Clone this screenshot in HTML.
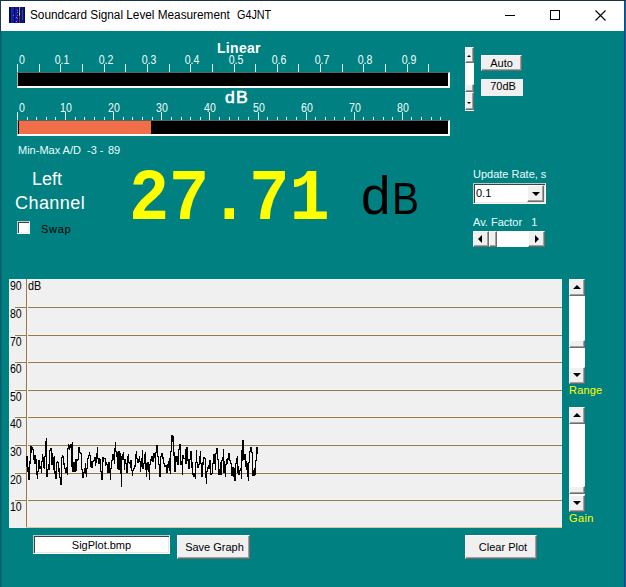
<!DOCTYPE html>
<html><head><meta charset="utf-8"><style>
*{margin:0;padding:0;box-sizing:border-box}
html,body{width:626px;height:587px;overflow:hidden;background:#008080}
body{position:relative;font-family:"Liberation Sans",sans-serif}
.a{position:absolute}
.lbl{position:absolute;color:#e8ffff;font-size:11px;line-height:11px;white-space:nowrap}
.rl{position:absolute;color:#f0ffff;font-size:12px;line-height:12px;white-space:nowrap;transform:scaleX(0.88);transform-origin:50% 0;width:30px;text-align:center}
.tk{position:absolute;width:1px;background:#e8ffff}
.btn{position:absolute;background:#f0f0f0;border-top:1px solid #fff;border-left:1px solid #fff;border-right:1px solid #6d6d6d;border-bottom:1px solid #6d6d6d;box-shadow:inset -1px -1px 0 #a0a0a0;color:#000;font-size:12px;text-align:center}
.sb{position:absolute;background:#f0f0f0;border-top:1px solid #fff;border-left:1px solid #fff;border-right:1px solid #6d6d6d;border-bottom:1px solid #6d6d6d;box-shadow:inset -1px -1px 0 #a0a0a0}
</style></head><body>

<div class="a" style="left:0;top:0;width:1px;height:587px;background:#045e6e"></div>
<div class="a" style="left:1px;top:0;width:1px;height:587px;background:#0e6e78"></div>
<div class="a" style="left:624px;top:0;width:1px;height:587px;background:#0a4e84"></div>
<div class="a" style="left:625px;top:0;width:1px;height:587px;background:#1c5f9c"></div>
<div class="a" style="left:0;top:0;width:626px;height:1px;background:#183448"></div>
<div class="a" style="left:1px;top:1px;width:623px;height:30px;background:#fff"></div>
<div class="a" style="left:0;top:0;width:1px;height:31px;background:#1c3a52"></div>
<svg class="a" style="left:9px;top:7px" width="16" height="16" viewBox="0 0 16 16" shape-rendering="crispEdges">
<rect width="16" height="16" fill="#00084a"/>
<rect x="2" y="0" width="1" height="16" fill="#0c3a8a"/>
<rect x="3" y="0" width="2" height="16" fill="#1020b0"/>
<rect x="6" y="0" width="3" height="16" fill="#1418a8"/>
<rect x="4" y="8" width="1" height="1" fill="#5070f0"/>
<rect x="7" y="10" width="1" height="1" fill="#8090ff"/>
<rect x="7" y="14" width="1" height="1" fill="#7080ff"/>
<rect x="8" y="3" width="1" height="1" fill="#5080e0"/>
<rect x="8" y="5" width="1" height="1" fill="#5080e0"/>
<rect x="8" y="8" width="1" height="1" fill="#5080e0"/>
<rect x="8" y="11" width="1" height="1" fill="#5080e0"/>
<rect x="10" y="0" width="1" height="16" fill="#a09890"/>
<rect x="10" y="6" width="1" height="2" fill="#e0d080"/>
<rect x="10" y="9" width="1" height="7" fill="#803060"/>
<rect x="11" y="0" width="1" height="16" fill="#201040"/>
<rect x="12" y="0" width="3" height="16" fill="#0c1878"/>
<rect x="13" y="3" width="1" height="10" fill="#2a4aa0"/>
</svg>
<div class="a" style="left:30px;top:8px;font-size:12px;line-height:14px;color:#000;white-space:pre;transform:scaleX(0.982);transform-origin:0 0">Soundcard Signal Level Measurement</div>
<div class="a" style="left:237px;top:8px;font-size:12px;line-height:14px;color:#000;white-space:pre;transform:scaleX(0.9);transform-origin:0 0">G4JNT</div>
<div class="a" style="left:505px;top:15px;width:10px;height:1px;background:#000"></div>
<div class="a" style="left:550px;top:10px;width:10px;height:10px;border:1px solid #000"></div>
<svg class="a" style="left:595px;top:10px" width="11" height="11" viewBox="0 0 11 11"><path d="M0.5 0.5L10.5 10.5M10.5 0.5L0.5 10.5" stroke="#000" stroke-width="1.1"/></svg>
<div class="a" style="left:217px;top:41px;font-size:14px;line-height:14px;font-weight:bold;letter-spacing:0.3px;color:#fff">Linear</div>
<div class="tk" style="left:17px;top:64px;height:8px"></div>
<div class="rl" style="left:7px;top:54px">0</div>
<div class="tk" style="left:39px;top:64px;height:8px"></div>
<div class="tk" style="left:60px;top:64px;height:8px"></div>
<div class="rl" style="left:47px;top:54px">0.1</div>
<div class="tk" style="left:82px;top:64px;height:8px"></div>
<div class="tk" style="left:104px;top:64px;height:8px"></div>
<div class="rl" style="left:91px;top:54px">0.2</div>
<div class="tk" style="left:125px;top:64px;height:8px"></div>
<div class="tk" style="left:147px;top:64px;height:8px"></div>
<div class="rl" style="left:134px;top:54px">0.3</div>
<div class="tk" style="left:169px;top:64px;height:8px"></div>
<div class="tk" style="left:190px;top:64px;height:8px"></div>
<div class="rl" style="left:177px;top:54px">0.4</div>
<div class="tk" style="left:212px;top:64px;height:8px"></div>
<div class="tk" style="left:234px;top:64px;height:8px"></div>
<div class="rl" style="left:221px;top:54px">0.5</div>
<div class="tk" style="left:255px;top:64px;height:8px"></div>
<div class="tk" style="left:277px;top:64px;height:8px"></div>
<div class="rl" style="left:264px;top:54px">0.6</div>
<div class="tk" style="left:298px;top:64px;height:8px"></div>
<div class="tk" style="left:320px;top:64px;height:8px"></div>
<div class="rl" style="left:307px;top:54px">0.7</div>
<div class="tk" style="left:342px;top:64px;height:8px"></div>
<div class="tk" style="left:363px;top:64px;height:8px"></div>
<div class="rl" style="left:350px;top:54px">0.8</div>
<div class="tk" style="left:385px;top:64px;height:8px"></div>
<div class="tk" style="left:407px;top:64px;height:8px"></div>
<div class="rl" style="left:394px;top:54px">0.9</div>
<div class="tk" style="left:428px;top:64px;height:8px"></div>
<div class="a" style="left:17px;top:72px;width:433px;height:16px;background:#000;border-top:1px solid #606060;border-left:1px solid #a8b8b8;border-right:2px solid #fff;border-bottom:2px solid #fff"></div>
<div class="a" style="left:225px;top:90px;font-size:16px;line-height:16px;letter-spacing:1px;color:#fff;-webkit-text-stroke:0.5px #fff;transform:scaleX(1.1);transform-origin:0 0">dB</div>
<div class="tk" style="left:17px;top:112px;height:8px"></div>
<div class="rl" style="left:7px;top:102px">0</div>
<div class="tk" style="left:27px;top:117px;height:3px"></div>
<div class="tk" style="left:36px;top:117px;height:3px"></div>
<div class="tk" style="left:46px;top:117px;height:3px"></div>
<div class="tk" style="left:55px;top:117px;height:3px"></div>
<div class="tk" style="left:65px;top:112px;height:8px"></div>
<div class="rl" style="left:51px;top:102px">10</div>
<div class="tk" style="left:75px;top:117px;height:3px"></div>
<div class="tk" style="left:84px;top:117px;height:3px"></div>
<div class="tk" style="left:94px;top:117px;height:3px"></div>
<div class="tk" style="left:104px;top:117px;height:3px"></div>
<div class="tk" style="left:113px;top:112px;height:8px"></div>
<div class="rl" style="left:99px;top:102px">20</div>
<div class="tk" style="left:123px;top:117px;height:3px"></div>
<div class="tk" style="left:132px;top:117px;height:3px"></div>
<div class="tk" style="left:142px;top:117px;height:3px"></div>
<div class="tk" style="left:152px;top:117px;height:3px"></div>
<div class="tk" style="left:161px;top:112px;height:8px"></div>
<div class="rl" style="left:147px;top:102px">30</div>
<div class="tk" style="left:171px;top:117px;height:3px"></div>
<div class="tk" style="left:181px;top:117px;height:3px"></div>
<div class="tk" style="left:190px;top:117px;height:3px"></div>
<div class="tk" style="left:200px;top:117px;height:3px"></div>
<div class="tk" style="left:209px;top:112px;height:8px"></div>
<div class="rl" style="left:195px;top:102px">40</div>
<div class="tk" style="left:219px;top:117px;height:3px"></div>
<div class="tk" style="left:229px;top:117px;height:3px"></div>
<div class="tk" style="left:238px;top:117px;height:3px"></div>
<div class="tk" style="left:248px;top:117px;height:3px"></div>
<div class="tk" style="left:258px;top:112px;height:8px"></div>
<div class="rl" style="left:244px;top:102px">50</div>
<div class="tk" style="left:267px;top:117px;height:3px"></div>
<div class="tk" style="left:277px;top:117px;height:3px"></div>
<div class="tk" style="left:286px;top:117px;height:3px"></div>
<div class="tk" style="left:296px;top:117px;height:3px"></div>
<div class="tk" style="left:306px;top:112px;height:8px"></div>
<div class="rl" style="left:292px;top:102px">60</div>
<div class="tk" style="left:315px;top:117px;height:3px"></div>
<div class="tk" style="left:325px;top:117px;height:3px"></div>
<div class="tk" style="left:334px;top:117px;height:3px"></div>
<div class="tk" style="left:344px;top:117px;height:3px"></div>
<div class="tk" style="left:354px;top:112px;height:8px"></div>
<div class="rl" style="left:340px;top:102px">70</div>
<div class="tk" style="left:363px;top:117px;height:3px"></div>
<div class="tk" style="left:373px;top:117px;height:3px"></div>
<div class="tk" style="left:383px;top:117px;height:3px"></div>
<div class="tk" style="left:392px;top:117px;height:3px"></div>
<div class="tk" style="left:402px;top:112px;height:8px"></div>
<div class="rl" style="left:388px;top:102px">80</div>
<div class="tk" style="left:411px;top:117px;height:3px"></div>
<div class="tk" style="left:421px;top:117px;height:3px"></div>
<div class="tk" style="left:431px;top:117px;height:3px"></div>
<div class="tk" style="left:440px;top:117px;height:3px"></div>
<div class="a" style="left:17px;top:120px;width:433px;height:16px;background:#000;border-top:1px solid #606060;border-left:1px solid #a8b8b8;border-right:2px solid #fff;border-bottom:2px solid #fff"></div>
<div class="a" style="left:19px;top:121px;width:132px;height:13px;background:#f06f48"></div>
<div class="a" style="left:465px;top:47px;width:9px;height:64px;background:#fff"></div>
<div class="sb" style="left:465px;top:47px;width:9px;height:16px"></div>
<div class="sb" style="left:465px;top:84px;width:9px;height:8px"></div>
<div class="sb" style="left:465px;top:92px;width:9px;height:18px"></div>
<div class="a" style="left:467px;top:55px;width:0;height:0;border-left:2px solid transparent;border-right:2px solid transparent;border-bottom:2px solid #000"></div>
<div class="a" style="left:467px;top:102px;width:0;height:0;border-left:2px solid transparent;border-right:2px solid transparent;border-top:2px solid #000"></div>
<div class="btn" style="left:481px;top:55px;width:41px;height:16px;line-height:14px;font-size:11px">Auto</div>
<div class="a" style="left:481px;top:79px;width:42px;height:17px;background:#f0f0f0;color:#000;font-size:11px;line-height:14px;text-align:center;padding-left:2px">70dB</div>
<div class="lbl" style="left:18px;top:145px;font-size:11px;color:#e8ffff;white-space:pre">Min-Max A/D</div>
<div class="lbl" style="left:87px;top:145px;font-size:11px;color:#e8ffff;white-space:pre">-3 -</div>
<div class="lbl" style="left:108px;top:145px;font-size:11px;color:#e8ffff;white-space:pre">89</div>
<div class="a" style="left:32px;top:169px;font-size:18px;line-height:20px;color:#fff">Left</div>
<div class="a" style="left:15px;top:193px;font-size:18px;line-height:20px;letter-spacing:0.45px;color:#fff">Channel</div>
<div class="a" style="left:17px;top:221px;width:13px;height:13px;background:#fff;border-top:1px solid #b8d0d0;border-left:1px solid #b8d0d0;border-right:1px solid #fff;border-bottom:1px solid #fff;box-shadow:inset 1px 1px 0 #404040, inset -1px -1px 0 #f0f0f0"></div>
<div class="a" style="left:41px;top:223px;font-size:11px;line-height:12px;letter-spacing:0.7px;color:#000">Swap</div>
<div class="a" style="left:129px;top:164px;font-family:'Liberation Mono',monospace;font-weight:bold;font-size:72px;line-height:72px;color:#ffff00;white-space:pre;transform:scaleX(0.928);transform-origin:0 0">27.71</div>
<div class="a" style="left:361px;top:169px;font-size:53px;line-height:53px;color:#000">d</div>
<div class="a" style="left:392px;top:176px;font-size:45px;line-height:45px;color:#000;transform:scaleX(0.9);transform-origin:0 0">B</div>
<div class="lbl" style="left:473px;top:168px;font-size:11px;line-height:12px;color:#e8ffff">Update Rate, s</div>
<div class="a" style="left:473px;top:183px;width:73px;height:21px;background:#fff;border-top:1px solid #b0d0d0;border-left:1px solid #b0d0d0;border-right:1px solid #fff;border-bottom:1px solid #fff;box-shadow:inset 1px 1px 0 #404040, inset -1px -1px 0 #e8e8e8"></div>
<div class="a" style="left:476px;top:187px;font-size:11px;line-height:12px;color:#000">0.1</div>
<div class="sb" style="left:527px;top:185px;width:17px;height:17px"></div>
<div class="a" style="left:532px;top:192px;width:0;height:0;border-left:4px solid transparent;border-right:4px solid transparent;border-top:4px solid #000"></div>
<div class="lbl" style="left:473px;top:216px;font-size:11px;line-height:12px;color:#e8ffff;white-space:pre">Av. Factor   1</div>
<div class="a" style="left:473px;top:231px;width:72px;height:16px;background:#fff"></div>
<div class="sb" style="left:473px;top:231px;width:16px;height:16px"></div>
<div class="sb" style="left:489px;top:231px;width:8px;height:16px"></div>
<div class="sb" style="left:528px;top:231px;width:17px;height:16px"></div>
<div class="a" style="left:478px;top:235px;width:0;height:0;border-top:4px solid transparent;border-bottom:4px solid transparent;border-right:4px solid #000"></div>
<div class="a" style="left:535px;top:235px;width:0;height:0;border-top:4px solid transparent;border-bottom:4px solid transparent;border-left:4px solid #000"></div>
<div class="a" style="left:9px;top:279px;width:553px;height:249px;background:#f0f0f0;border-top:1px solid #e8ffff;border-left:1px solid #e8ffff"></div>
<svg class="a" style="left:0;top:0" width="626" height="587">
<line x1="15" y1="499.5" x2="562" y2="499.5" stroke="#fdf5e2" stroke-width="1"/>
<line x1="15" y1="500.5" x2="562" y2="500.5" stroke="#8c7a58" stroke-width="1"/>
<line x1="15" y1="472.5" x2="562" y2="472.5" stroke="#fdf5e2" stroke-width="1"/>
<line x1="15" y1="473.5" x2="562" y2="473.5" stroke="#8c7a58" stroke-width="1"/>
<line x1="15" y1="444.5" x2="562" y2="444.5" stroke="#fdf5e2" stroke-width="1"/>
<line x1="15" y1="445.5" x2="562" y2="445.5" stroke="#8c7a58" stroke-width="1"/>
<line x1="15" y1="416.5" x2="562" y2="416.5" stroke="#fdf5e2" stroke-width="1"/>
<line x1="15" y1="417.5" x2="562" y2="417.5" stroke="#8c7a58" stroke-width="1"/>
<line x1="15" y1="389.5" x2="562" y2="389.5" stroke="#fdf5e2" stroke-width="1"/>
<line x1="15" y1="390.5" x2="562" y2="390.5" stroke="#8c7a58" stroke-width="1"/>
<line x1="15" y1="361.5" x2="562" y2="361.5" stroke="#fdf5e2" stroke-width="1"/>
<line x1="15" y1="362.5" x2="562" y2="362.5" stroke="#8c7a58" stroke-width="1"/>
<line x1="15" y1="334.5" x2="562" y2="334.5" stroke="#fdf5e2" stroke-width="1"/>
<line x1="15" y1="335.5" x2="562" y2="335.5" stroke="#8c7a58" stroke-width="1"/>
<line x1="15" y1="306.5" x2="562" y2="306.5" stroke="#fdf5e2" stroke-width="1"/>
<line x1="15" y1="307.5" x2="562" y2="307.5" stroke="#8c7a58" stroke-width="1"/>
<line x1="27.5" y1="279" x2="27.5" y2="528" stroke="#fbf3e0" stroke-width="1"/>
<line x1="26.5" y1="279" x2="26.5" y2="528" stroke="#8c7a58" stroke-width="1"/>
<line x1="26" y1="527.5" x2="562" y2="527.5" stroke="#d8c8a8" stroke-width="1"/>
<path d="M26 456h1v11h-1zM27 456h1v16h-1zM28 467h1v13h-1zM29 461h1v19h-1zM30 446h1v18h-1zM31 446h1v7h-1zM32 447h1v3h-1zM33 449h1v11h-1zM34 455h1v9h-1zM35 455h1v9h-1zM36 459h1v16h-1zM37 471h1v8h-1zM38 460h1v12h-1zM39 460h1v9h-1zM40 466h1v3h-1zM41 461h1v12h-1zM42 454h1v8h-1zM43 457h1v11h-1zM44 456h1v13h-1zM45 441h1v16h-1zM46 438h1v39h-1zM47 469h1v8h-1zM48 464h1v6h-1zM49 450h1v20h-1zM50 448h1v3h-1zM51 448h1v17h-1zM52 453h1v12h-1zM53 457h1v13h-1zM54 456h1v18h-1zM55 471h1v8h-1zM56 462h1v17h-1zM57 461h1v2h-1zM58 462h1v10h-1zM59 468h1v10h-1zM60 477h1v8h-1zM61 457h1v28h-1zM62 455h1v3h-1zM63 456h1v9h-1zM64 463h1v6h-1zM65 468h1v5h-1zM66 467h1v6h-1zM67 448h1v27h-1zM68 444h1v5h-1zM69 445h1v5h-1zM70 444h1v4h-1zM71 444h1v23h-1zM72 442h1v30h-1zM73 462h1v10h-1zM74 462h1v10h-1zM75 459h1v13h-1zM76 459h1v12h-1zM77 459h1v2h-1zM78 447h1v13h-1zM79 447h1v6h-1zM80 452h1v2h-1zM81 453h1v17h-1zM82 469h1v9h-1zM83 472h1v6h-1zM84 468h1v5h-1zM85 463h1v11h-1zM86 468h1v9h-1zM87 458h1v11h-1zM88 455h1v4h-1zM89 452h1v4h-1zM90 455h1v12h-1zM91 461h1v7h-1zM92 461h1v7h-1zM93 460h1v2h-1zM94 457h1v4h-1zM95 457h1v9h-1zM96 453h1v10h-1zM97 447h1v12h-1zM98 458h1v6h-1zM99 458h1v6h-1zM100 459h1v13h-1zM101 471h1v9h-1zM102 457h1v23h-1zM103 457h1v5h-1zM104 458h1v1h-1zM105 458h1v8h-1zM106 462h1v3h-1zM107 464h1v9h-1zM108 462h1v11h-1zM109 462h1v11h-1zM110 468h1v12h-1zM111 460h1v9h-1zM112 454h1v7h-1zM113 454h1v6h-1zM114 448h1v16h-1zM115 442h1v10h-1zM116 451h1v6h-1zM117 452h1v17h-1zM118 451h1v19h-1zM119 451h1v19h-1zM120 453h1v21h-1zM121 456h1v31h-1zM122 454h1v6h-1zM123 452h1v8h-1zM124 459h1v11h-1zM125 459h1v5h-1zM126 463h1v10h-1zM127 456h1v17h-1zM128 454h1v9h-1zM129 462h1v2h-1zM130 460h1v8h-1zM131 460h1v11h-1zM132 470h1v6h-1zM133 468h1v3h-1zM134 465h1v4h-1zM135 454h1v13h-1zM136 451h1v8h-1zM137 458h1v5h-1zM138 459h1v4h-1zM139 456h1v6h-1zM140 461h1v11h-1zM141 458h1v9h-1zM142 450h1v19h-1zM143 463h1v6h-1zM144 454h1v10h-1zM145 452h1v18h-1zM146 463h1v14h-1zM147 462h1v8h-1zM148 462h1v10h-1zM149 464h1v16h-1zM150 459h1v6h-1zM151 456h1v5h-1zM152 456h1v6h-1zM153 453h1v9h-1zM154 453h1v5h-1zM155 452h1v17h-1zM156 445h1v8h-1zM157 445h1v12h-1zM158 456h1v9h-1zM159 464h1v13h-1zM160 456h1v21h-1zM161 453h1v4h-1zM162 453h1v6h-1zM163 457h1v7h-1zM164 463h1v4h-1zM165 465h1v2h-1zM166 465h1v8h-1zM167 464h1v9h-1zM168 461h1v7h-1zM169 458h1v13h-1zM170 451h1v23h-1zM171 435h1v17h-1zM172 435h1v7h-1zM173 436h1v20h-1zM174 452h1v20h-1zM175 456h1v16h-1zM176 456h1v6h-1zM177 456h1v9h-1zM178 449h1v16h-1zM179 444h1v6h-1zM180 444h1v21h-1zM181 461h1v4h-1zM182 455h1v20h-1zM183 455h1v4h-1zM184 458h1v1h-1zM185 449h1v15h-1zM186 447h1v17h-1zM187 447h1v14h-1zM188 459h1v10h-1zM189 459h1v10h-1zM190 451h1v9h-1zM191 451h1v17h-1zM192 462h1v13h-1zM193 473h1v4h-1zM194 473h1v4h-1zM195 462h1v17h-1zM196 450h1v13h-1zM197 462h1v6h-1zM198 464h1v4h-1zM199 456h1v9h-1zM200 451h1v13h-1zM201 463h1v14h-1zM202 462h1v15h-1zM203 457h1v8h-1zM204 457h1v2h-1zM205 458h1v20h-1zM206 471h1v13h-1zM207 467h1v5h-1zM208 465h1v4h-1zM209 460h1v9h-1zM210 460h1v15h-1zM211 473h1v2h-1zM212 463h1v11h-1zM213 454h1v10h-1zM214 454h1v10h-1zM215 453h1v17h-1zM216 448h1v6h-1zM217 448h1v12h-1zM218 459h1v16h-1zM219 469h1v6h-1zM220 462h1v13h-1zM221 460h1v15h-1zM222 457h1v4h-1zM223 449h1v24h-1zM224 461h1v12h-1zM225 464h1v13h-1zM226 459h1v6h-1zM227 458h1v6h-1zM228 453h1v7h-1zM229 453h1v8h-1zM230 460h1v4h-1zM231 463h1v13h-1zM232 467h1v9h-1zM233 467h1v10h-1zM234 468h1v13h-1zM235 463h1v18h-1zM236 458h1v6h-1zM237 456h1v17h-1zM238 466h1v9h-1zM239 470h1v5h-1zM240 468h1v3h-1zM241 450h1v29h-1zM242 440h1v21h-1zM243 440h1v20h-1zM244 454h1v6h-1zM245 454h1v13h-1zM246 461h1v9h-1zM247 463h1v14h-1zM248 462h1v19h-1zM249 451h1v12h-1zM250 447h1v5h-1zM251 447h1v6h-1zM252 452h1v24h-1zM253 470h1v6h-1zM254 468h1v8h-1zM255 460h1v15h-1zM256 447h1v14h-1zM257 447h1v7h-1z" fill="#000" shape-rendering="crispEdges"/>
</svg>
<div class="a" style="left:10px;top:501px;font-size:12px;line-height:12px;color:#000;transform:scaleX(0.88);transform-origin:0 0">10</div>
<div class="a" style="left:10px;top:474px;font-size:12px;line-height:12px;color:#000;transform:scaleX(0.88);transform-origin:0 0">20</div>
<div class="a" style="left:10px;top:446px;font-size:12px;line-height:12px;color:#000;transform:scaleX(0.88);transform-origin:0 0">30</div>
<div class="a" style="left:10px;top:418px;font-size:12px;line-height:12px;color:#000;transform:scaleX(0.88);transform-origin:0 0">40</div>
<div class="a" style="left:10px;top:391px;font-size:12px;line-height:12px;color:#000;transform:scaleX(0.88);transform-origin:0 0">50</div>
<div class="a" style="left:10px;top:363px;font-size:12px;line-height:12px;color:#000;transform:scaleX(0.88);transform-origin:0 0">60</div>
<div class="a" style="left:10px;top:336px;font-size:12px;line-height:12px;color:#000;transform:scaleX(0.88);transform-origin:0 0">70</div>
<div class="a" style="left:10px;top:308px;font-size:12px;line-height:12px;color:#000;transform:scaleX(0.88);transform-origin:0 0">80</div>
<div class="a" style="left:10px;top:280px;font-size:12px;line-height:12px;color:#000;transform:scaleX(0.88);transform-origin:0 0">90</div>
<div class="a" style="left:28px;top:280px;font-size:12px;line-height:12px;color:#000;transform:scaleX(0.9);transform-origin:0 0">dB</div>
<div class="a" style="left:569px;top:279px;width:16px;height:105px;background:#fff"></div>
<div class="sb" style="left:569px;top:279px;width:16px;height:17px"></div>
<div class="sb" style="left:569px;top:340px;width:16px;height:8px"></div>
<div class="sb" style="left:569px;top:367px;width:16px;height:17px"></div>
<div class="a" style="left:573px;top:285px;width:0;height:0;border-left:4px solid transparent;border-right:4px solid transparent;border-bottom:4px solid #000"></div>
<div class="a" style="left:573px;top:373px;width:0;height:0;border-left:4px solid transparent;border-right:4px solid transparent;border-top:4px solid #000"></div>
<div class="a" style="left:569px;top:407px;width:16px;height:105px;background:#fff"></div>
<div class="sb" style="left:569px;top:407px;width:16px;height:17px"></div>
<div class="sb" style="left:569px;top:486px;width:16px;height:8px"></div>
<div class="sb" style="left:569px;top:495px;width:16px;height:17px"></div>
<div class="a" style="left:573px;top:413px;width:0;height:0;border-left:4px solid transparent;border-right:4px solid transparent;border-bottom:4px solid #000"></div>
<div class="a" style="left:573px;top:501px;width:0;height:0;border-left:4px solid transparent;border-right:4px solid transparent;border-top:4px solid #000"></div>
<div class="a" style="left:569px;top:384px;font-size:11px;line-height:12px;letter-spacing:0.2px;color:#ffff00">Range</div>
<div class="a" style="left:569px;top:512px;font-size:11px;line-height:12px;letter-spacing:0.4px;color:#ffff00">Gain</div>
<div class="a" style="left:33px;top:535px;width:137px;height:19px;background:#fff;border-top:1px solid #b0d0d0;border-left:1px solid #b0d0d0;border-right:1px solid #fff;border-bottom:1px solid #fff;box-shadow:inset 1px 1px 0 #404040, inset -1px -1px 0 #e8e8e8;font-size:11px;line-height:18px;text-align:center;color:#000">SigPlot.bmp</div>
<div class="btn" style="left:177px;top:535px;width:73px;height:24px;line-height:22px;font-size:11px;padding-left:2px">Save Graph</div>
<div class="btn" style="left:465px;top:535px;width:72px;height:24px;line-height:23px;font-size:11px;padding-left:4px">Clear Plot</div>
</body></html>
